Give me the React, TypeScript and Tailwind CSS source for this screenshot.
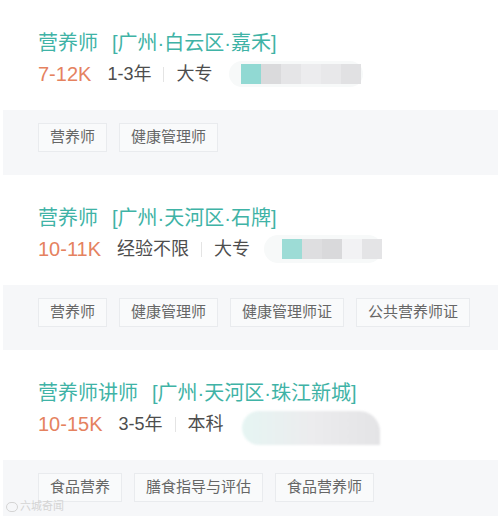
import React from 'react'

interface Job {
  title: string
  location: string
  salary: string
  exp: string
  edu: string
  tags: string[]
  blob: 'a' | 'b' | 'c'
}

const jobs: Job[] = [
  { title: '营养师', location: '[广州·白云区·嘉禾]', salary: '7-12K', exp: '1-3年', edu: '大专', tags: ['营养师', '健康管理师'], blob: 'a' },
  { title: '营养师', location: '[广州·天河区·石牌]', salary: '10-11K', exp: '经验不限', edu: '大专', tags: ['营养师', '健康管理师', '健康管理师证', '公共营养师证'], blob: 'b' },
  { title: '营养师讲师', location: '[广州·天河区·珠江新城]', salary: '10-15K', exp: '3-5年', edu: '本科', tags: ['食品营养', '膳食指导与评估', '食品营养师'], blob: 'c' },
]

// blurred-out company name
function Blob({ kind }: { kind: Job['blob'] }) {
  if (kind === 'a') {
    return (
      <div className="ml-[17px] flex items-center rounded-full bg-[#f7f9f9] py-[3px] pl-[12px] pr-[2px] blur-[0.6px]">
        <div className="h-[20px] w-[20px] bg-[#91d9d3]" />
        <div className="h-[20px] w-[20px] bg-[#dadadc]" />
        <div className="h-[20px] w-[20px] bg-[#e5e5e7]" />
        <div className="h-[20px] w-[20px] bg-[#ececee]" />
        <div className="h-[20px] w-[20px] bg-[#e8e8ea]" />
        <div className="h-[20px] w-[20px] bg-[#e1e1e3]" />
      </div>
    )
  }
  if (kind === 'b') {
    return (
      <div className="ml-[14px] flex items-center rounded-full bg-[#f7f9f9] py-[4px] pl-[18px] blur-[0.6px]">
        <div className="h-[20px] w-[20px] bg-[#9ddcd6]" />
        <div className="h-[20px] w-[20px] bg-[#dedee0]" />
        <div className="h-[20px] w-[20px] bg-[#d9d9db]" />
        <div className="h-[20px] w-[20px] bg-[#f2f2f4]" />
        <div className="h-[20px] w-[20px] bg-[#e4e4e6]" />
      </div>
    )
  }
  return (
    <div className="ml-[18px] mt-[8px] h-[34px] w-[138px] rounded-l-[18px] rounded-tr-[22px] bg-gradient-to-r from-[#e6f5f3] via-[#ececee] to-[#e4e4e6] blur-[1px]" />
  )
}

function JobCard({ job }: { job: Job }) {
  return (
    <div>
      <div className="px-[38px] pt-[29px] pb-[22px]">
        <div className="flex items-center text-[20px] leading-[28px] text-[#3fb3a6]">
          <span>{job.title}</span>
          <span className="ml-[14px]">{job.location}</span>
        </div>
        <div className="mt-[3px] flex h-[28px] items-center">
          <span className="text-[20px] text-[#e5825f]">{job.salary}</span>
          <span className="ml-4 text-[18px] text-[#4d4d4d]">{job.exp}</span>
          <span className="mx-[12px] h-[15px] w-px bg-[#e4e4e4]" />
          <span className="text-[18px] text-[#4d4d4d]">{job.edu}</span>
          <Blob kind={job.blob} />
        </div>
      </div>
      <div className="ml-[3px] bg-[#f6f7f9] pl-[35px] pt-[13px] pb-[23px]">
        <div className="flex gap-3">
          {job.tags.map((t) => (
            <span
              key={t}
              className="flex h-[29px] items-center border border-[#e9ebee] bg-[#f9fafb] px-[11px] text-[15px] text-[#666]"
            >
              {t}
            </span>
          ))}
        </div>
      </div>
    </div>
  )
}

export default function App() {
  return (
    <div
      className="relative h-[516px] w-[498px] overflow-hidden bg-white"
      style={{ fontFamily: '"Liberation Sans", "Noto Sans CJK SC", sans-serif' }}
    >
      {jobs.map((j, i) => (
        <JobCard key={i} job={j} />
      ))}
      {/* watermark */}
      <div className="absolute bottom-[4px] left-[6px] flex items-center gap-[2px] text-[11px] leading-none text-[#d4d4d4]">
        <span className="h-[10px] w-[12px] rounded-full border border-[#d4d4d4]" />
        <span>六城奇闻</span>
      </div>
    </div>
  )
}
